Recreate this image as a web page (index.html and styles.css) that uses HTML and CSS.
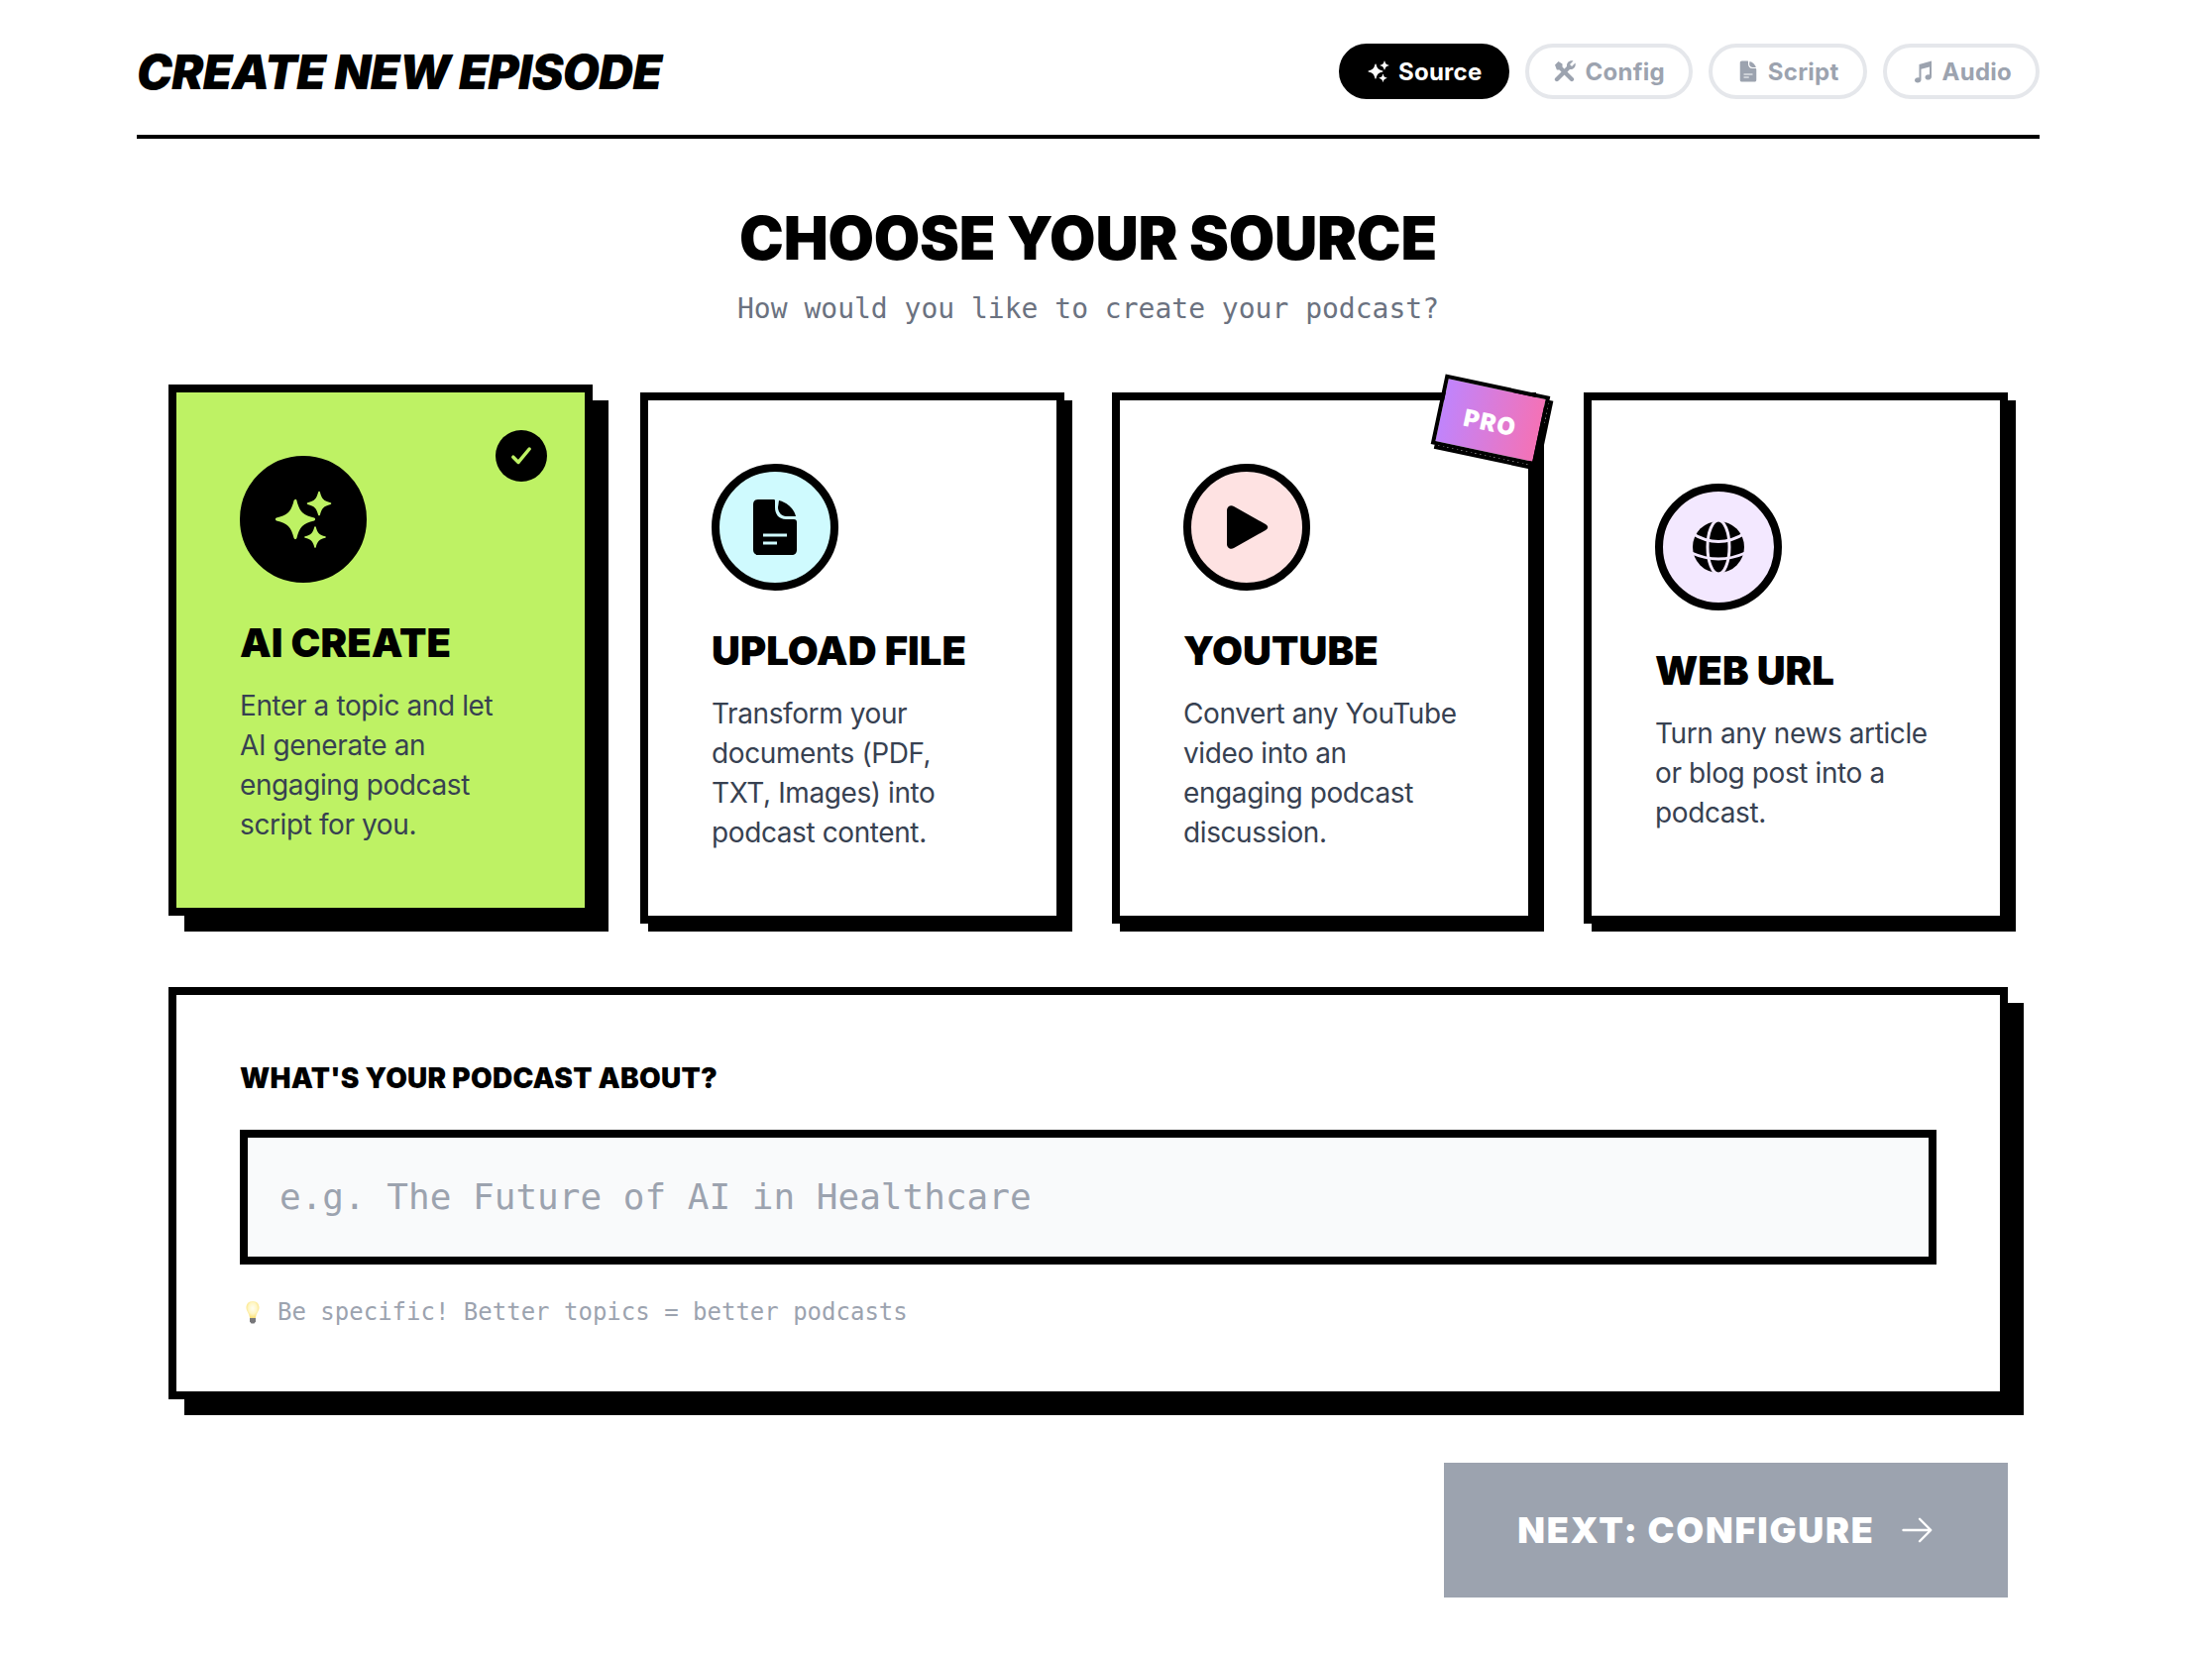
FILE: index.html
```html
<!DOCTYPE html>
<html lang="en">
<head>
  <meta charset="UTF-8">
  <title>Create New Episode</title>
  <link rel="stylesheet" href="styles.css">
</head>
<body>
  <!-- icon sprite -->
  <svg class="sprite" xmlns="http://www.w3.org/2000/svg">
    <defs>
      <radialGradient id="bulb-glow" cx="50%" cy="42%" r="55%">
        <stop offset="0" stop-color="#fffef2"/>
        <stop offset="0.6" stop-color="#fff6c4"/>
        <stop offset="1" stop-color="#fbe27c"/>
      </radialGradient>
    </defs>
    <symbol id="i-sparkles" viewBox="-32 -32 64 64">
      <path transform="translate(-8 0) scale(20.500)" d="M-.05-.95C0-1 .05-1 .07-.93C.2-.38.38-.2.93-.07C1-.05 1 .05.93.07C.38.2.2.38.07.93C.05 1-.05 1-.07.93C-.2.38-.38.2-.93.07C-1 .05-1-.05-.93-.07C-.38-.2-.2-.38-.07-.93Z"/>
      <path transform="translate(16 -16) scale(12.500)" d="M-.05-.95C0-1 .05-1 .07-.93C.2-.38.38-.2.93-.07C1-.05 1 .05.93.07C.38.2.2.38.07.93C.05 1-.05 1-.07.93C-.2.38-.38.2-.93.07C-1 .05-1-.05-.93-.07C-.38-.2-.2-.38-.07-.93Z"/>
      <path transform="translate(12 18) scale(11)" d="M-.05-.95C0-1 .05-1 .07-.93C.2-.38.38-.2.93-.07C1-.05 1 .05.93.07C.38.2.2.38.07.93C.05 1-.05 1-.07.93C-.2.38-.38.2-.93.07C-1 .05-1-.05-.93-.07C-.38-.2-.2-.38-.07-.93Z"/>
    </symbol>
    <symbol id="i-file" viewBox="-32 -32 64 64">
      <path fill-rule="evenodd" d="M-17-28H-1C0-28 0-27 0-26V-20C0-13 4-8 11-8H19C21-8 22-7 22-5V23C22 26 20 28 17 28H-17C-20 28-22 26-22 23V-23C-22-26-20-28-17-28ZM-12 6.500V9.500H12V6.500ZM-12 14.500V17.500H2V14.500Z"/>
      <path d="M4-27C12-25 19-19 21-11H11C7-11 3-15 3-20Z"/>
    </symbol>
    <symbol id="i-play" viewBox="-32 -32 64 64">
      <path d="M-20-17C-20-21-16-23-13-21L19-3C22-1 22 1 19 3L-13 21C-16 23-20 21-20 17Z"/>
    </symbol>
    <symbol id="i-globe" viewBox="-32 -32 64 64">
      <circle r="26"/>
      <g fill="none" stroke="#f3e8ff" stroke-width="3">
        <ellipse rx="11" ry="27"/>
        <path d="M-27-14Q0 3 27-14"/>
        <path d="M-27 6Q0 18 27 6"/>
      </g>
    </symbol>
    <symbol id="i-tools" viewBox="0 0 24 24">
      <path d="M2 5.500 5.500 2 9.500 4.500V7.500L20.500 18.500C21.500 19.500 21.500 20.500 20.500 21.500S18.500 22.500 17.500 21.500L6.500 10.500H3.900Z"/>
      <path d="M22.500 3.500 19 7 17 5 20.500 1.500C17 .5 13.500 3 14 7L2.500 18.500C1.500 19.500 1.500 20.800 2.400 21.600S4.500 22.500 5.500 21.500L17 10C21 10.500 23.500 7 22.500 3.500Z"/>
    </symbol>
    <symbol id="i-music" viewBox="0 0 24 24">
      <path d="M8.500 5 21 1.500V17.500C21 19.500 19.300 20.600 17.500 20.600S14.500 19.500 14.500 18 16 15.300 17.800 15.300C18.300 15.300 18.700 15.400 19 15.500V7.500L10.500 9.800V20.500C10.500 22.500 8.800 23.500 7 23.500S4 22.400 4 21 5.500 18.200 7.300 18.200C7.800 18.200 8.200 18.300 8.500 18.400Z"/>
    </symbol>
    <symbol id="i-check" viewBox="0 0 24 24">
      <path d="M5 13l4.500 4.500L19 6" fill="none" stroke="currentColor" stroke-width="3" stroke-linecap="round" stroke-linejoin="round"/>
    </symbol>
    <symbol id="i-arrow" viewBox="0 0 24 24">
      <path d="M3 12h18M14 4.500l7.500 7.500-7.500 7.500" fill="none" stroke="currentColor" stroke-width="1.600" stroke-linecap="round" stroke-linejoin="round"/>
    </symbol>
  </svg>

  <div class="page">
    <!-- Header -->
    <header class="top-bar">
      <h1 class="page-title">CREATE NEW EPISODE</h1>
      <nav class="steps">
        <span class="step active"><svg class="step-icon"><use href="#i-sparkles"/></svg>Source</span>
        <span class="step"><svg class="step-icon"><use href="#i-tools"/></svg>Config</span>
        <span class="step"><svg class="step-icon"><use href="#i-file"/></svg>Script</span>
        <span class="step"><svg class="step-icon"><use href="#i-music"/></svg>Audio</span>
      </nav>
    </header>

    <main class="content">
      <div class="intro">
        <h2 class="intro-title">CHOOSE YOUR SOURCE</h2>
        <p class="intro-sub">How would you like to create your podcast?</p>
      </div>

      <!-- Source cards -->
      <div class="cards">
        <div class="card selected">
          <span class="check"><svg><use href="#i-check"/></svg></span>
          <div class="card-icon icon-ai"><svg><use href="#i-sparkles"/></svg></div>
          <h3 class="card-title">AI CREATE</h3>
          <p class="card-text">Enter a topic and let AI generate an engaging podcast script for you.</p>
        </div>
        <div class="card">
          <div class="card-icon icon-file"><svg><use href="#i-file"/></svg></div>
          <h3 class="card-title">UPLOAD FILE</h3>
          <p class="card-text">Transform your documents (PDF, TXT, Images) into podcast content.</p>
        </div>
        <div class="card">
          <span class="pro-badge">PRO</span>
          <div class="card-icon icon-video"><svg><use href="#i-play"/></svg></div>
          <h3 class="card-title">YOUTUBE</h3>
          <p class="card-text">Convert any YouTube video into an engaging podcast discussion.</p>
        </div>
        <div class="card">
          <div class="card-icon icon-web"><svg><use href="#i-globe"/></svg></div>
          <h3 class="card-title">WEB URL</h3>
          <p class="card-text">Turn any news article or blog post into a podcast.</p>
        </div>
      </div>

      <!-- Topic -->
      <section class="topic">
        <label class="topic-label" for="topic">WHAT'S YOUR PODCAST ABOUT?</label>
        <input class="topic-input" id="topic" type="text" placeholder="e.g. The Future of AI in Healthcare">
        <p class="topic-hint">
          <svg class="bulb" viewBox="0 0 16 24">
            <path d="M8 1C4 1 1.500 3.800 1.500 7.500 1.500 11 4.500 13 5 18H11C11.500 13 14.500 11 14.500 7.500 14.500 3.800 12 1 8 1Z" fill="url(#bulb-glow)"/>
            <path d="M5 18H11V21.500L9.500 23.500H6.500L5 21.500Z" fill="#77777a"/>
          </svg>
          Be specific! Better topics = better podcasts
        </p>
      </section>

      <div class="actions">
        <button class="next-button" type="button">NEXT: CONFIGURE <svg><use href="#i-arrow"/></svg></button>
      </div>
    </main>
  </div>
</body>
</html>
```

FILE: styles.css
```css
* {
  margin: 0;
  padding: 0;
  box-sizing: border-box;
}

body {
  font-family: 'Inter', 'Liberation Sans', sans-serif;
  background: #fff;
  color: #000;
}

.sprite {
  position: absolute;
  width: 0;
  height: 0;
}

.page {
  width: 1920px;
  margin-left: 138px;
}

/* Header */
.top-bar {
  display: flex;
  justify-content: space-between;
  align-items: center;
  padding: 44px 0 36px;
  border-bottom: 4px solid #000;
}

.page-title {
  padding-top: 2px;
  font-size: 48px;
  font-weight: 900;
  font-style: italic;
  letter-spacing: -0.650px;
  line-height: 54px;
}

.steps {
  display: flex;
  gap: 16px;
}

.step {
  display: flex;
  align-items: center;
  gap: 8px;
  height: 56px;
  padding: 0 24px;
  border: 4px solid #e5e7eb;
  border-radius: 28px;
  color: #9ca3af;
  fill: #9ca3af;
  font-size: 24px;
  font-weight: 700;
  letter-spacing: 0.250px;
}

.step.active {
  background: #000;
  border-color: #000;
  color: #fff;
  fill: #fff;
}

.step-icon {
  width: 24px;
  height: 24px;
}

/* Main */
.content {
  padding: 0 32px;
}

.intro {
  padding-top: 60px;
  text-align: center;
}

.intro-title {
  font-size: 60px;
  font-weight: 900;
  line-height: 80px;
  letter-spacing: -0.250px;
}

.intro-sub {
  margin-top: 12px;
  font-family: 'DejaVu Sans Mono', monospace;
  font-size: 28px;
  line-height: 40px;
  color: #6b7280;
}

/* Cards */
.cards {
  display: grid;
  grid-template-columns: repeat(4, 1fr);
  gap: 48px;
  margin-top: 64px;
  margin-bottom: 64px;
}

.card {
  position: relative;
  display: flex;
  flex-direction: column;
  justify-content: center;
  padding: 64px;
  background: #fff;
  border: 8px solid #000;
  box-shadow: 8px 8px 0 #000;
}

.card.selected {
  background: #bef264;
  transform: translateY(-8px);
  box-shadow: 16px 16px 0 #000;
}

.card-icon {
  display: flex;
  align-items: center;
  justify-content: center;
  width: 128px;
  height: 128px;
  margin-bottom: 33px;
  border: 8px solid #000;
  border-radius: 50%;
}

.card-icon svg {
  flex: none;
  width: 64px;
  height: 64px;
}

.icon-ai {
  background: #000;
  fill: #bef264;
}

.icon-file { background: #cffafe; }
.icon-video { background: #fee2e2; }
.icon-web { background: #f3e8ff; }

.card-title {
  margin-bottom: 15px;
  font-size: 40px;
  font-weight: 900;
  line-height: 56px;
  letter-spacing: 0.050px;
}

.card-text {
  font-size: 28px;
  line-height: 40px;
  letter-spacing: -0.400px;
  color: #374151;
}

.check {
  position: absolute;
  top: 38px;
  right: 38px;
  display: flex;
  align-items: center;
  justify-content: center;
  width: 52px;
  height: 52px;
  border-radius: 50%;
  background: #000;
  color: #bef264;
}

.check svg {
  width: 28px;
  height: 28px;
}

.pro-badge {
  position: absolute;
  top: -16px;
  right: -16px;
  width: 108px;
  height: 72px;
  padding-top: 5px;
  display: flex;
  align-items: center;
  justify-content: center;
  background: linear-gradient(to right, #c084fc, #f472b6);
  border: 4px solid #000;
  box-shadow: 4px 4px 0 #000;
  transform: rotate(12deg);
  color: #fff;
  font-size: 24px;
  font-weight: 900;
  letter-spacing: 1px;
}

/* Topic panel */
.topic {
  display: flex;
  flex-direction: column;
  padding: 64px;
  border: 8px solid #000;
  box-shadow: 16px 16px 0 #000;
}

.topic-label {
  margin-bottom: 32px;
  font-size: 28px;
  font-weight: 900;
  line-height: 40px;
  letter-spacing: 0.250px;
}

.topic-input {
  height: 136px;
  padding: 0 32px 2px;
  border: 8px solid #000;
  border-radius: 0;
  background: #f9fafb;
  font-family: 'DejaVu Sans Mono', monospace;
  font-size: 36px;
  color: #000;
}

.topic-input::placeholder {
  color: #9ca3af;
  opacity: 1;
}

.topic-hint {
  display: flex;
  align-items: center;
  gap: 17px;
  margin-top: 32px;
  font-family: 'DejaVu Sans Mono', monospace;
  font-size: 24px;
  line-height: 32px;
  color: #9ca3af;
}

.bulb {
  width: 16px;
  height: 24px;
  margin-left: 5px;
}

/* Footer button */
.actions {
  display: flex;
  justify-content: flex-end;
  margin-top: 64px;
}

.next-button {
  display: flex;
  align-items: center;
  justify-content: center;
  gap: 24px;
  width: 569px;
  height: 136px;
  border: none;
  background: #9ca3af;
  color: #fff;
  font-family: 'Inter', sans-serif;
  font-size: 36px;
  font-weight: 900;
  letter-spacing: 1.750px;
}

.next-button svg {
  width: 36px;
  height: 36px;
}
```
